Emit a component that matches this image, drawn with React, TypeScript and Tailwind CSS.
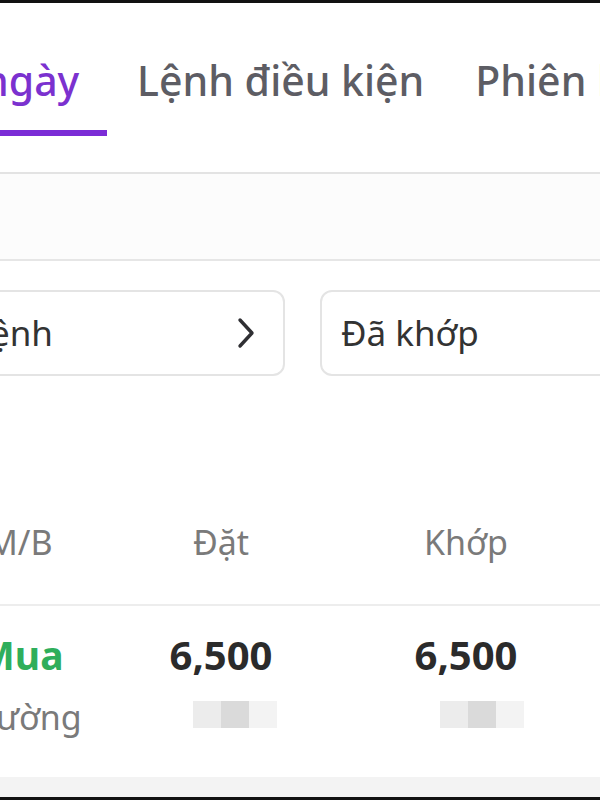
import React from "react";

const font = { fontFamily: '"Noto Sans", "Open Sans", sans-serif' };

function Chevron() {
  return (
    <svg width="22" height="32" viewBox="0 0 22 32" fill="none">
      <polyline
        points="5,3 17,16 5,29"
        stroke="#2f2f33"
        strokeWidth="3.4"
        strokeLinecap="round"
        strokeLinejoin="round"
      />
    </svg>
  );
}

function Blur() {
  return (
    <div className="flex h-[27px] w-[84px]">
      <div className="w-[28px] bg-[#ececec]" />
      <div className="w-[28px] bg-[#dadada]" />
      <div className="w-[28px] bg-[#f3f3f3]" />
    </div>
  );
}

export default function App() {
  return (
    <div className="w-[600px] h-[800px] overflow-hidden bg-white flex flex-col" style={font}>
      <div className="h-[3px] bg-[#111]" />

      {/* tabs */}
      <div className="h-[169px] pt-[53px] flex items-start whitespace-nowrap overflow-hidden">
        <div className="flex flex-col w-[107px] shrink-0">
          <span className="-ml-[17px] text-[41px] leading-[48px] font-medium text-[#7b31cf]">ngày</span>
          <div className="mt-[26px] h-[6px] bg-[#7b2cd6]" />
        </div>
        <span className="ml-[30px] text-[41px] leading-[48px] font-medium text-[#5d5d64]">Lệnh điều kiện</span>
        <span className="ml-[51px] text-[41px] leading-[48px] font-medium text-[#5d5d64]">Phiên b</span>
      </div>

      <div className="h-[2px] bg-[#e3e3e3]" />
      <div className="h-[85px] bg-[#fcfcfc]" />
      <div className="h-[2px] bg-[#e6e6e6]" />

      {/* filters */}
      <div className="pt-[29px] flex whitespace-nowrap">
        <div className="-ml-[30px] w-[315px] h-[86px] shrink-0 rounded-[12px] border-2 border-[#e4e4e4] flex items-center justify-between pl-[18px] pr-[26px]">
          <span className="text-[35px] text-[#333]">ệnh</span>
          <Chevron />
        </div>
        <div className="ml-[35px] w-[320px] h-[86px] shrink-0 rounded-[12px] border-2 border-[#e4e4e4] flex items-center pl-[19px]">
          <span className="text-[35px] text-[#333]">Đã khớp</span>
        </div>
      </div>

      {/* table header */}
      <div className="pt-[146px] pb-[42px] flex whitespace-nowrap text-[34px] leading-[40px] text-[#7a7a7a]">
        <div className="w-[150px] shrink-0">
          <span className="block -ml-[13px]">M/B</span>
        </div>
        <div className="w-[142px] shrink-0 text-center">Đặt</div>
        <div className="ml-[103px] w-[142px] shrink-0 text-center">Khớp</div>
      </div>
      <div className="h-[2px] bg-[#ededed]" />

      {/* row */}
      <div className="pt-[25px] flex whitespace-nowrap">
        <div className="w-[150px] shrink-0 flex flex-col">
          <span className="-ml-[22px] text-[39px] leading-[48px] font-bold text-[#2fae5b]">Mua</span>
          <span className="mt-[18px] -ml-[4px] text-[34px] leading-[40px] text-[#7a7a7a]">ường</span>
        </div>
        <div className="w-[142px] shrink-0 flex flex-col">
          <span className="text-center text-[40px] leading-[48px] font-bold text-[#2b2b2b]">6,500</span>
          <div className="mt-[22px] ml-[43px]">
            <Blur />
          </div>
        </div>
        <div className="ml-[103px] w-[142px] shrink-0 flex flex-col">
          <span className="text-center text-[40px] leading-[48px] font-bold text-[#2b2b2b]">6,500</span>
          <div className="mt-[22px] ml-[45px]">
            <Blur />
          </div>
        </div>
      </div>

      <div className="flex-1" />
      <div className="h-[20px] bg-[#f3f3f3]" />
      <div className="h-[3px] bg-[#111]" />
    </div>
  );
}
